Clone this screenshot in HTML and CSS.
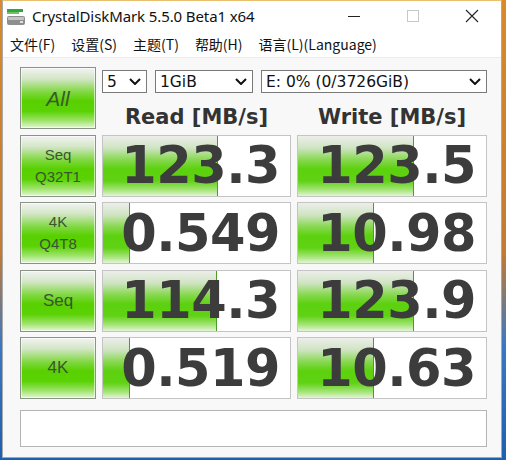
FILE: index.html
```html
<!DOCTYPE html>
<html lang="zh-CN">
<head>
    <meta charset="UTF-8">
    <meta name="viewport" content="width=device-width, initial-scale=1.0">
    <title>CrystalDiskMark 5.5.0 Beta1 x64</title>
    <link rel="stylesheet" href="styles.css">
</head>
<body>
    <div class="window">
        <div class="titlebar">
            <svg class="app-icon" width="18" height="16" viewBox="0 0 18 16">
                <rect x="0" y="0" width="16" height="3" fill="#2fa83a"/>
                <rect x="0" y="3" width="12" height="2" fill="#6cc36a"/>
                <rect x="0" y="7" width="18" height="9" rx="2" fill="#8e8e8e"/>
                <rect x="1" y="8" width="16" height="3" rx="1" fill="#c4c4c4"/>
                <rect x="13" y="12" width="3" height="2" fill="#e0e0e0"/>
            </svg>
            <span class="title">CrystalDiskMark 5.5.0 Beta1 x64</span>
            <div class="controls">
                <span class="ctl">
                    <svg width="14" height="14" viewBox="0 0 14 14"><path d="M1 7.5h12" stroke="#222" stroke-width="1"/></svg>
                </span>
                <span class="ctl">
                    <svg width="14" height="14" viewBox="0 0 14 14"><rect x="1.5" y="1.5" width="11" height="11" fill="none" stroke="#c8c8c8" stroke-width="1"/></svg>
                </span>
                <span class="ctl">
                    <svg width="14" height="14" viewBox="0 0 14 14"><path d="M1 1l12 12M13 1L1 13" stroke="#222" stroke-width="1.1"/></svg>
                </span>
            </div>
        </div>

        <div class="menubar">
            <span>文件(F)</span>
            <span>设置(S)</span>
            <span>主题(T)</span>
            <span>帮助(H)</span>
            <span>语言(L)(Language)</span>
        </div>

        <div class="content">
            <div class="bench">
                <div class="btn btn-all">All</div>
                <div class="top">
                    <div class="selects">
                        <div class="sel sel-count">5
                            <svg class="chev" width="12" height="7" viewBox="0 0 12 7"><path d="M1 1l5 5 5-5" fill="none" stroke="#111" stroke-width="2"/></svg>
                        </div>
                        <div class="sel sel-size">1GiB
                            <svg class="chev" width="12" height="7" viewBox="0 0 12 7"><path d="M1 1l5 5 5-5" fill="none" stroke="#111" stroke-width="2"/></svg>
                        </div>
                        <div class="sel sel-drive">E: 0% (0/3726GiB)
                            <svg class="chev" width="12" height="7" viewBox="0 0 12 7"><path d="M1 1l5 5 5-5" fill="none" stroke="#111" stroke-width="2"/></svg>
                        </div>
                    </div>
                    <div class="heads">
                        <div>Read [MB/s]</div>
                        <div>Write [MB/s]</div>
                    </div>
                </div>

                <div class="btn">Seq<br>Q32T1</div>
                <div class="val" style="--fill: 115px">123.3</div>
                <div class="val" style="--fill: 116px">123.5</div>

                <div class="btn">4K<br>Q4T8</div>
                <div class="val" style="--fill: 27px">0.549</div>
                <div class="val" style="--fill: 76px">10.98</div>

                <div class="btn btn-one">Seq</div>
                <div class="val" style="--fill: 114px">114.3</div>
                <div class="val" style="--fill: 116px">123.9</div>

                <div class="btn btn-one">4K</div>
                <div class="val" style="--fill: 27px">0.519</div>
                <div class="val" style="--fill: 76px">10.63</div>
            </div>
            <div class="status"></div>
        </div>
    </div>
</body>
</html>
```

FILE: styles.css
```css
/* Page */
* {
    margin: 0;
    padding: 0;
    box-sizing: border-box;
}

body {
    width: 506px;
    height: 460px;
    overflow: hidden;
    padding-left: 2px;
    background: linear-gradient(to bottom, #d98a2a 0%, #c47a30 55%, #3b78c4 75%, #1f5fb0 100%);
    font-family: "Noto Sans", "Noto Sans CJK SC", sans-serif;
}

.window {
    width: 500px;
    height: 458px;
    background: #f8f8f8;
    border: 1px solid #a8a8a8;
    border-top: 1px solid #e8c070;
    display: flex;
    flex-direction: column;
}

/* Title bar */
.titlebar {
    height: 29px;
    background: #fff;
    display: flex;
    align-items: center;
    padding-left: 4px;
}

.app-icon {
    margin-right: 7px;
    margin-top: 2px;
}

.title {
    font-family: "Noto Sans", sans-serif;
    font-size: 15px;
    color: #111;
    letter-spacing: -0.1px;
}

.controls {
    margin-left: auto;
    display: flex;
    height: 100%;
}

.ctl {
    width: 59px;
    display: flex;
    align-items: center;
    justify-content: center;
}

/* Menu */
.menubar {
    height: 28px;
    background: #fff;
    display: flex;
    align-items: center;
    gap: 16px;
    padding-left: 7px;
    font-family: "Noto Sans CJK SC", sans-serif;
    font-size: 14px;
    color: #111;
    border-bottom: 1px solid #ececec;
}

/* Benchmark area */
.content {
    flex: 1;
    padding: 9px 0 0 17px;
}

.bench {
    display: grid;
    grid-template-columns: 76px 189px 190px;
    grid-template-rows: repeat(5, 62px);
    column-gap: 6px;
    row-gap: 5.5px;
}

.btn {
    border: 1px solid #8a9486;
    background: linear-gradient(to bottom, #f2f3f1 0%, #d3e6c6 18%, #7fd840 40%, #58d000 55%, #5ad204 72%, #9fe46c 88%, #e4f6d8 100%);
    box-shadow: inset 0 0 0 1px rgba(255, 255, 255, 0.6);
    display: flex;
    align-items: center;
    justify-content: center;
    text-align: center;
    font-family: "Liberation Sans", sans-serif;
    font-size: 15px;
    line-height: 22px;
    color: #3b5530;
}

.btn-one {
    font-size: 17px;
}

.btn-all {
    font-size: 21px;
    font-style: italic;
    color: #3a5a2c;
    padding-top: 2px;
}

.top {
    grid-column: 2 / 4;
    display: flex;
    flex-direction: column;
}

.selects {
    display: flex;
    gap: 8px;
    margin-top: 3px;
    height: 25px;
}

.sel {
    border: 1px solid #7a7a7a;
    background: #fff;
    display: flex;
    align-items: center;
    padding: 0 5px 0 4px;
    font-family: "DejaVu Sans", sans-serif;
    font-size: 15.5px;
    color: #111;
}

.chev {
    margin-left: auto;
}

.sel-count {
    width: 45px;
}

.sel-size {
    width: 98px;
}

.sel-drive {
    width: 226px;
}

.heads {
    flex: 1;
    display: grid;
    grid-template-columns: 189px 190px;
    column-gap: 6px;
    align-items: center;
    text-align: center;
    font-family: "DejaVu Sans", sans-serif;
    font-weight: bold;
    font-size: 21px;
    color: #333;
    padding-top: 12px;
}

.val {
    border: 1px solid #c4c4c4;
    background:
        linear-gradient(#4f9a2c, #4f9a2c) no-repeat calc(var(--fill) - 1px) 0 / 1px 100%,
        linear-gradient(to bottom, #eceeea 0%, #cfe4c2 20%, #86d84e 40%, #5cd10e 55%, #60d214 75%, #a6e57a 90%, #e2f5d6 100%) no-repeat 0 0 / var(--fill) 100%,
        #fff;
    display: flex;
    align-items: center;
    justify-content: flex-end;
    padding-right: 10px;
    font-family: "DejaVu Sans", sans-serif;
    font-weight: bold;
    font-size: 51px;
    letter-spacing: -0.5px;
    color: #3c3c3c;
}

.status {
    margin-top: 10.5px;
    width: 467px;
    height: 37px;
    border: 1px solid #b4b4b4;
    background: #fff;
}
```
